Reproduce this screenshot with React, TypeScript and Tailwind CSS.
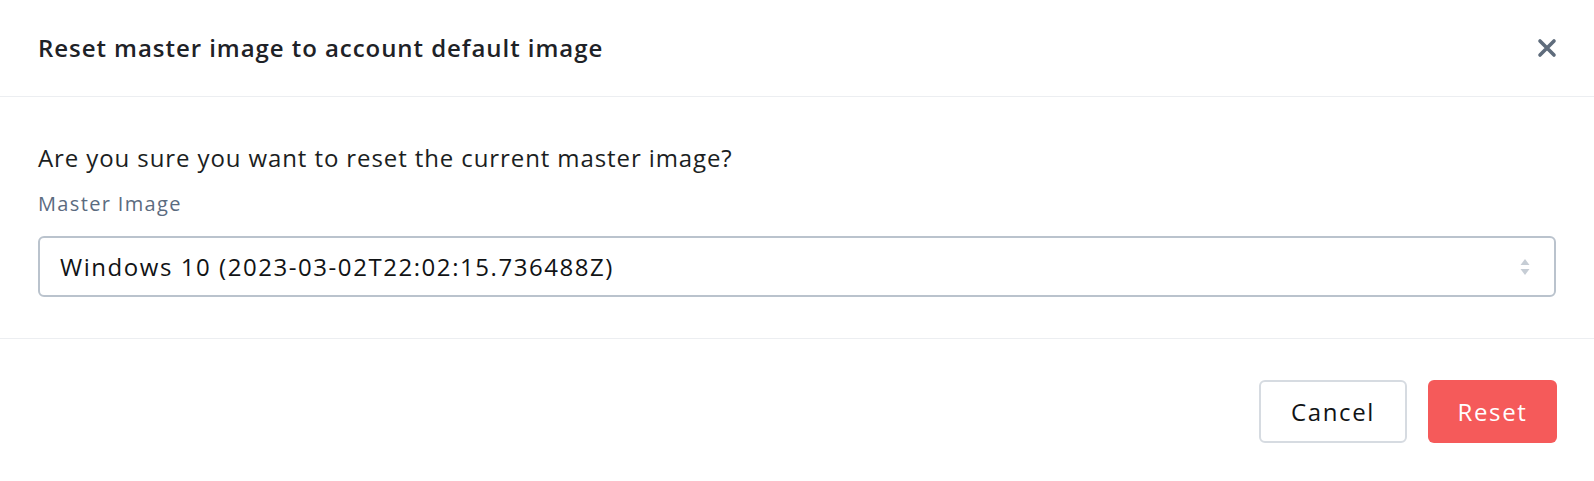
const font = { fontFamily: '"Open Sans", "Noto Sans", sans-serif' };

function CloseIcon() {
    return (
        <svg width="20" height="20" viewBox="0 0 20 20" className="block">
            <path d="M3 3 L17 17 M17 3 L3 17" stroke="#5f6c7c" strokeWidth="3.6" strokeLinecap="round" />
        </svg>
    );
}

function Chevrons() {
    return (
        <svg width="10" height="18" viewBox="0 0 10 18" className="shrink-0">
            <path d="M5 1 L9.5 7 H0.5 Z" fill="#c6cdd5" />
            <path d="M5 17 L9.5 11 H0.5 Z" fill="#c6cdd5" />
        </svg>
    );
}

export default function App() {
    return (
        <div className="w-full h-[481px] bg-white flex flex-col" style={font}>
            {/* Header */}
            <div className="h-[97px] shrink-0 pl-[38px] pr-[37px] flex items-center justify-between border-b border-[#eceef1]">
                <h2 className="text-[24px] leading-[30px] font-semibold tracking-[0.95px] text-[#1e2227]">
                    Reset master image to account default image
                </h2>
                <button>
                    <CloseIcon />
                </button>
            </div>

            {/* Body */}
            <div className="px-[38px] pt-[46px] pb-[41px] border-b border-[#eceef1]">
                <p className="text-[24px] leading-[30px] tracking-[0.9px] text-[#1b1e22]">
                    Are you sure you want to reset the current master image?
                </p>
                <label className="block mt-[18px] text-[20px] leading-[26px] tracking-[1.35px] text-[#5b6b7f]">
                    Master Image
                </label>
                <div className="mt-[19px] h-[61px] rounded-[6px] border-2 border-[#bac3cd] pl-[20px] pr-[24px] flex items-center justify-between">
                    <span className="text-[24px] tracking-[1.55px] text-[#111315]">
                        Windows 10 (2023-03-02T22:02:15.736488Z)
                    </span>
                    <Chevrons />
                </div>
            </div>

            {/* Footer */}
            <div className="px-[37px] pt-[41px] flex justify-end gap-[21px]">
                <button className="w-[148px] h-[63px] rounded-[6px] border-2 border-[#d6dbe1] bg-white text-[24px] tracking-[1.6px] text-[#111315]">
                    Cancel
                </button>
                <button className="w-[129px] h-[63px] rounded-[6px] bg-[#f55a5a] text-[24px] tracking-[1.6px] text-white">
                    Reset
                </button>
            </div>
        </div>
    );
}
